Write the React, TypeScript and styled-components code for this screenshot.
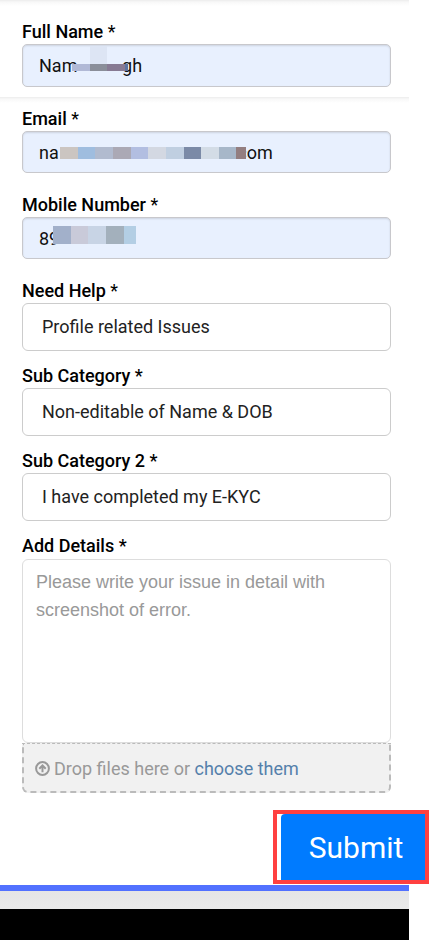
import React from "react";
import styled, { createGlobalStyle } from "styled-components";

const Global = createGlobalStyle`
  *, *::before, *::after { box-sizing: border-box; }
  body {
    margin: 0;
    background: #fff;
    color: #000;
    font-family: Roboto, "Liberation Sans", sans-serif;
    font-size: 18px;
  }
`;

const Form = styled.form`
  margin: 0;
`;

const Section = styled.section<{ $first?: boolean }>`
  position: relative;
  padding: ${(p) => (p.$first ? "20px 38px 10px 22px" : "10px 38px 0 22px")};
  background: linear-gradient(#ececec, #f8f8f8 2px, #fff 6px) no-repeat left top / calc(100% - 20px) 6px;
`;

const Field = styled.div<{ $gap?: number }>`
  display: flex;
  flex-direction: column;
  margin-bottom: ${(p) => p.$gap ?? 0}px;
`;

const Label = styled.label`
  font-weight: 500;
  line-height: 24px;
`;

const Star = styled.span`
  font-weight: 400;
`;

const InputWrap = styled.div<{ $height?: number }>`
  position: relative;
  display: flex;
  height: ${(p) => p.$height ?? 42}px;
`;

const Input = styled.input`
  flex: 1;
  min-width: 0;
  padding: 0 16px;
  border: 1px solid #c8c8cc;
  border-radius: 5px;
  background: #e8f0fe;
  box-shadow: inset 0 1px 2px rgba(0, 0, 0, 0.12);
  color: #111;
  font: inherit;
`;

const Select = styled.select`
  appearance: none;
  height: 48px;
  padding: 0 19px 2px;
  border: 1px solid #ccc;
  border-radius: 6px;
  background: #fff;
  color: #222;
  font: inherit;
`;

const Details = styled.textarea`
  display: block;
  height: 184px;
  margin-top: 1px;
  padding: 8px 13px;
  border: 1px solid #ddd;
  border-radius: 6px;
  resize: none;
  background: #fff;
  font-family: "Liberation Sans", Arial, sans-serif;
  font-size: 18px;
  line-height: 28px;
  &::placeholder {
    color: #999;
    opacity: 1;
  }
`;

const DropZone = styled.div`
  display: flex;
  align-items: center;
  gap: 4px;
  height: 50px;
  padding: 1px 11px 0;
  border: 2px dashed #bbb;
  border-top-width: 1px;
  border-radius: 0 0 6px 6px;
  background: #f1f1f1;
  color: #999;
`;

const ChooseLink = styled.a`
  color: #5580ab;
  text-decoration: none;
`;

const Mosaic = styled.svg<{ $left: number; $top: number }>`
  position: absolute;
  left: ${(p) => p.$left}px;
  top: ${(p) => p.$top}px;
  pointer-events: none;
`;

const Actions = styled.div`
  display: flex;
  justify-content: flex-end;
  margin-top: 17px;
`;

const Highlight = styled.div`
  display: flex;
  padding-left: 4px;
  border: 4px solid #ff4040;
`;

const Submit = styled.button`
  width: 144px;
  height: 66px;
  padding: 0 0 0 6px;
  border: 0;
  border-radius: 4px 0 0 0;
  background: #007bff;
  color: #fff;
  font: inherit;
  font-size: 30px;
`;

const Footer = styled.footer`
  margin: 1px 20px 0 0;
  border-top: 6px solid #5271ff;
  background: linear-gradient(#e6e6e6, #efefef);
  padding-top: 18px;
`;

const FooterBar = styled.div`
  height: 31px;
  background: #000;
`;

type Tile = [x: number, width: number, color: string];

function Mask({ left, top, height, tiles }: { left: number; top: number; height: number; tiles: Tile[] }) {
  const last = tiles[tiles.length - 1];
  return (
    <Mosaic $left={left} $top={top} width={last[0] + last[1]} height={height} aria-hidden="true">
      {tiles.map(([x, w, c]) => (
        <rect key={x} x={x} width={w} height={height} fill={c} />
      ))}
    </Mosaic>
  );
}

const nameTiles: Tile[] = [[0, 18, "#b1b9d6"], [18, 17, "#8a8e99"], [35, 18, "#877a93"], [53, 3, "#5c74a3"]];
const emailTiles: Tile[] = [
  [0, 18, "#cbc5c1"], [18, 17, "#9fbddf"], [35, 18, "#b1bbcf"], [53, 18, "#aba9b5"],
  [71, 17, "#b2bee1"], [88, 18, "#d3d8e2"], [106, 18, "#c0cfe1"], [124, 17, "#7b8aa7"],
  [141, 18, "#d3dce6"], [159, 17, "#a7b7c9"], [176, 10, "#937e80"],
];
const phoneTiles: Tile[] = [[0, 18, "#a2b0ca"], [18, 17, "#c9cad9"], [35, 18, "#c8d4e5"], [53, 18, "#a3b0bc"], [71, 12, "#b3cee4"]];

const hidden = (n: number) => "\u00a0".repeat(n);

export default function App() {
  return (
    <>
      <Global />
      <Form onSubmit={(e) => e.preventDefault()}>
        <Section $first>
          <Field>
            <Label htmlFor="name">Full Name <Star>*</Star></Label>
            <InputWrap $height={43}>
              <Input id="name" type="text" defaultValue={`Nam${hidden(10)}gh`} />
              <Mask left={68} top={2} height={18} tiles={[[0, 17, "#dde5f4"]]} />
              <Mask left={50} top={20} height={7} tiles={nameTiles} />
            </InputWrap>
          </Field>
        </Section>
        <Section>
          <Field $gap={20}>
            <Label htmlFor="email">Email <Star>*</Star></Label>
            <InputWrap>
              <Input id="email" type="text" defaultValue={`na${hidden(40)}com`} />
              <Mask left={38} top={16} height={12} tiles={emailTiles} />
            </InputWrap>
          </Field>
          <Field $gap={20}>
            <Label htmlFor="mobile">Mobile Number <Star>*</Star></Label>
            <InputWrap>
              <Input id="mobile" type="tel" defaultValue="89" />
              <Mask left={31} top={9} height={18} tiles={phoneTiles} />
            </InputWrap>
          </Field>
          <Field $gap={13}>
            <Label htmlFor="help">Need Help <Star>*</Star></Label>
            <Select id="help"><option>Profile related Issues</option></Select>
          </Field>
          <Field $gap={13}>
            <Label htmlFor="sub">Sub Category *</Label>
            <Select id="sub"><option>Non-editable of Name &amp; DOB</option></Select>
          </Field>
          <Field $gap={13}>
            <Label htmlFor="sub2">Sub Category 2 *</Label>
            <Select id="sub2"><option>I have completed my E-KYC</option></Select>
          </Field>
          <Field>
            <Label htmlFor="details">Add Details *</Label>
            <Details id="details" placeholder="Please write your issue in detail with screenshot of error." />
            <DropZone>
              <svg width="15" height="15" viewBox="0 0 15 15" fill="none" stroke="#999" strokeWidth="2" aria-hidden="true">
                <circle cx="7.5" cy="7.5" r="6.4" />
                <path d="M7.5 11.2V5M4.3 7.7l3.2-3.2 3.2 3.2" />
              </svg>
              <span>Drop files here or <ChooseLink href="#">choose them</ChooseLink></span>
            </DropZone>
          </Field>
        </Section>
        <Actions>
          <Highlight><Submit type="submit">Submit</Submit></Highlight>
        </Actions>
      </Form>
      <Footer><FooterBar /></Footer>
    </>
  );
}
